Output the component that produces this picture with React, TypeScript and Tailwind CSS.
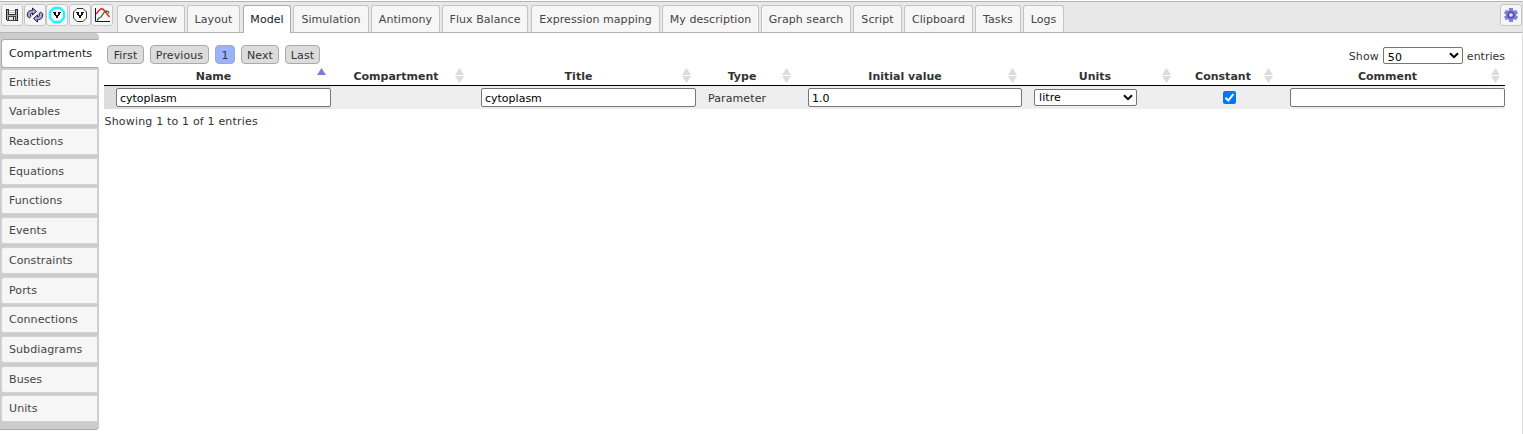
import React from "react";

const tabs: { label: string; cls: string }[] = [
  { label: "Overview", cls: "w-[68px] mr-[2px]" },
  { label: "Layout", cls: "w-[53px] mr-[3px]" },
  { label: "Model", cls: "w-[48px] mr-[2px]" },
  { label: "Simulation", cls: "w-[76px] mr-[2px]" },
  { label: "Antimony", cls: "w-[69px] mr-[2px]" },
  { label: "Flux Balance", cls: "w-[86px] mr-[3px]" },
  { label: "Expression mapping", cls: "w-[129px] mr-[2px]" },
  { label: "My description", cls: "w-[97px] mr-[2px]" },
  { label: "Graph search", cls: "w-[90px] mr-[2px]" },
  { label: "Script", cls: "w-[49px] mr-[2px]" },
  { label: "Clipboard", cls: "w-[69px] mr-[2px]" },
  { label: "Tasks", cls: "w-[46px] mr-[2px]" },
  { label: "Logs", cls: "w-[41px]" },
];

const sections = [
  "Compartments", "Entities", "Variables", "Reactions", "Equations", "Functions", "Events",
  "Constraints", "Ports", "Connections", "Subdiagrams", "Buses", "Units",
];

const columns = ["Name", "Compartment", "Title", "Type", "Initial value", "Units", "Constant", "Comment"];

function SaveIcon() {
  return (
    <svg width="16" height="16" viewBox="0 0 16 16" shapeRendering="crispEdges" className="shrink-0">
      <path d="M2 2h12v12H3l-1-1z" fill="#222" />
      <path d="M3 3h10v10H3z" fill="#aaa" />
      <path d="M4 2h8v6H4z" fill="#333" />
      <path d="M5 2h6v5H5z" fill="#fff" />
      <path d="M5 3h6v1H5zM5 5h6v1H5z" fill="#bbb" />
      <path d="M4 9h8v5H4z" fill="#444" />
      <path d="M5 10h6v3H5z" fill="#e4e4e4" />
      <path d="M9 10h1v3H9z" fill="#222" />
    </svg>
  );
}

function RefreshIcon() {
  const arrow = "M1.500 9.500C.5 5.500 3 3.300 6.500 3.300V1L10.500 4.500 6.500 8V6C5 6 4.200 7.300 4.800 9.500L3.500 11z";
  return (
    <svg width="18" height="16" viewBox="0 0 18 16" fill="#a8a8d8" stroke="#1c1c38" strokeWidth="1" strokeLinejoin="round" className="shrink-0">
      <path d={arrow} />
      <path d={arrow} transform="rotate(180 9 8)" />
    </svg>
  );
}

function CheckIcon({ active }: { active?: boolean }) {
  return (
    <svg width="18" height="18" viewBox="0 0 18 18" className="shrink-0">
      {active ? (
        <path d="M6 2h6l4 4v6l-4 4H6l-4-4V6z" fill="#fff" stroke="#24f4fb" strokeWidth="2.400" />
      ) : (
        <path d="M6 2.500h6L15.500 6v6L12 15.500H6L2.500 12V6z" fill="#fff" stroke="#333" />
      )}
      <path d="M5 6h3v1H5zM10 6h3v1h-3zM6 7h2v2H6zM10 7h2v2h-2zM7 9h4v1H7zM8 10h2v2H8z" fill="#111" shapeRendering="crispEdges" />
    </svg>
  );
}

function PlotIcon() {
  return (
    <svg width="18" height="18" viewBox="0 0 18 18" fill="none" className="shrink-0">
      <path d="M2.500 2v13.500H17" stroke="#0000d0" />
      <path d="M4 14.500l2-2.500 2-1 3-4.500 2-1.500 2 .5 1 2" stroke="#188028" strokeWidth="1.300" />
      <path d="M3 8l4.500-5H10l6.500 8" stroke="#f01818" strokeWidth="1.300" />
    </svg>
  );
}

function GearIcon() {
  return (
    <svg width="16" height="16" viewBox="0 0 16 16">
      <g fill="#8080e2">
        <rect x="6" y="1" width="4" height="14" />
        <rect x="6" y="1" width="4" height="14" transform="rotate(60 8 8)" />
        <rect x="6" y="1" width="4" height="14" transform="rotate(120 8 8)" />
        <circle cx="8" cy="8" r="5.300" />
      </g>
      <circle cx="8" cy="8" r="2.800" fill="#e8e8f4" stroke="#5858ac" strokeWidth="2" />
    </svg>
  );
}

function ToolButton({ children }: { children: React.ReactNode }) {
  return (
    <button className="flex h-[22px] w-[22px] shrink-0 items-center justify-center rounded-[3px] border border-[#c5c5c5] bg-[#f6f6f6]">
      {children}
    </button>
  );
}

function SortIcon({ sorted }: { sorted?: boolean }) {
  return (
    <svg width="9" height="15" viewBox="0 0 9 15" className="shrink-0">
      <path d="M4.500 0L9 7H0z" fill={sorted ? "#7c7ce0" : "#dcdcdc"} />
      {!sorted && <path d="M0 8h9l-4.500 7z" fill="#dcdcdc" />}
    </svg>
  );
}

function Select({ value, className }: { value: string; className: string }) {
  return (
    <span className={`relative inline-flex ${className}`}>
      <select className="h-full w-full appearance-none rounded-[2px] border border-[#767676] bg-white pt-[1px] pl-[4px] tracking-[0.1px] text-black" defaultValue={value}>
        <option>{value}</option>
      </select>
      <svg width="10" height="7" viewBox="0 0 10 7" className="pointer-events-none absolute top-[5px] right-[4px]" fill="none">
        <path d="M1 1.200l4 4 4-4" stroke="#000" strokeWidth="2" />
      </svg>
    </span>
  );
}

function Field({ value }: { value: string }) {
  return <input className="block h-[19px] w-full rounded-[2px] border border-[#767676] bg-white px-[3px] pt-[2px] text-black" defaultValue={value} />;
}

export default function App() {
  return (
    <div className="flex h-[434px] w-[1523px] flex-col overflow-hidden border-r border-[#dddddd] bg-white pt-px font-['Verdana','DejaVu_Sans',sans-serif] text-[11px] leading-[14px] text-[#333]">
      <header className="flex h-[32px] shrink-0 border-y border-[#b5b5b5] bg-[#e8e8e8] pl-px">
        <div className="flex gap-[0.5px] pt-[2px]">
          <ToolButton><SaveIcon /></ToolButton>
          <ToolButton><RefreshIcon /></ToolButton>
          <ToolButton><CheckIcon active /></ToolButton>
          <ToolButton><CheckIcon /></ToolButton>
          <ToolButton><PlotIcon /></ToolButton>
        </div>
        <nav className="ml-[4px] flex pt-[3px]">
          {tabs.map((t) => (
            <div
              key={t.label}
              className={`flex shrink-0 justify-center rounded-t-[3px] border border-b-0 pt-[7px] tracking-[0.06px] whitespace-nowrap ${t.cls} ${
                t.label === "Model" ? "-mb-px border-[#aaa] bg-white text-[#212121]" : "border-[#c5c5c5] bg-[#f6f6f6] text-[#454545]"
              }`}
            >
              {t.label}
            </div>
          ))}
        </nav>
        <div className="ml-auto pt-[2px]">
          <ToolButton><GearIcon /></ToolButton>
        </div>
      </header>

      <div className="flex min-h-0 flex-1">
        <aside className="flex h-[397px] w-[99px] shrink-0 flex-col gap-[2.700px] rounded-r-[4px] border-b border-[#aaa] bg-[#ccc] pt-[6px] pl-px">
          {sections.map((s, i) => (
            <div
              key={s}
              className={`flex shrink-0 items-center rounded-l-[3px] border pt-[1px] pl-[7px] tracking-[0.08px] ${
                i === 0 ? "-mb-[1.500px] h-[28.500px] w-[98px] border-[#aaa] border-r-white bg-white text-[#212121]" : "h-[27px] w-[97px] border-[#d3d3d3] bg-[#f6f6f6] text-[#454545]"
              }`}
            >
              {s}
            </div>
          ))}
        </aside>

        <main className="ml-[5px] w-[1401px]">
          <div className="flex h-[34px] justify-between">
            <div className="flex gap-[6px] pt-[12px] pl-[3px]">
              {[
                ["First", "w-[37px]"],
                ["Previous", "w-[59px]"],
                ["1", "w-[20px]"],
                ["Next", "w-[38px]"],
                ["Last", "w-[35px]"],
              ].map(([label, w]) => (
                <button
                  key={label}
                  className={`flex h-[19px] items-center justify-center rounded-[4px] border border-[#aaa] pt-[2px] tracking-[0.1px] text-[#333] ${w} ${label === "1" ? "bg-[#99b3ff]" : "bg-[#dcdcdc]"}`}
                >
                  {label}
                </button>
              ))}
            </div>
            <div className="flex items-start pt-[14px] leading-[18px]">
              <span className="pt-px tracking-[0.1px]">Show</span>
              <Select value="50" className="mr-[4px] ml-[4px] h-[17px] w-[80px]" />
              <span className="pt-px">entries</span>
            </div>
          </div>

          <div className="grid h-[19px] grid-cols-[227px_138px_227px_100px_226px_154px_102px_227px] border-b border-black font-bold">
            {columns.map((c, i) => (
              <div key={c} className="flex pt-[1px] pr-[5px] pl-[10px]">
                <span className="flex-1 pt-[2px] pr-[4px] text-center">{c}</span>
                <SortIcon sorted={i === 0} />
              </div>
            ))}
          </div>

          <div className="grid h-[23px] grid-cols-[227px_138px_227px_100px_226px_154px_102px_227px] items-center bg-[#eee]">
            <div className="flex h-full items-center bg-[#ddd] pl-[12px]"><Field value="cytoplasm" /></div>
            <div />
            <div className="pl-[12px]"><Field value="cytoplasm" /></div>
            <div className="pt-[2px] pl-[12px] tracking-[0.1px]">Parameter</div>
            <div className="pl-[12px]"><Field value="1.0" /></div>
            <div className="flex pl-[12px]"><Select value="litre" className="h-[17px] w-[103px]" /></div>
            <div className="flex pl-[46.500px]">
              <svg width="13" height="13" viewBox="0 0 13 13" role="checkbox" aria-checked="true">
                <rect width="13" height="13" rx="2" fill="#0075ff" />
                <path d="M2.500 6.800l2.800 2.700 5-6.300" fill="none" stroke="#fff" strokeWidth="2" />
              </svg>
            </div>
            <div className="pl-[12px]"><Field value="" /></div>
          </div>
          <div className="pt-[6px] pl-[0.500px] tracking-[0.180px]">Showing 1 to 1 of 1 entries</div>
        </main>
      </div>
    </div>
  );
}
